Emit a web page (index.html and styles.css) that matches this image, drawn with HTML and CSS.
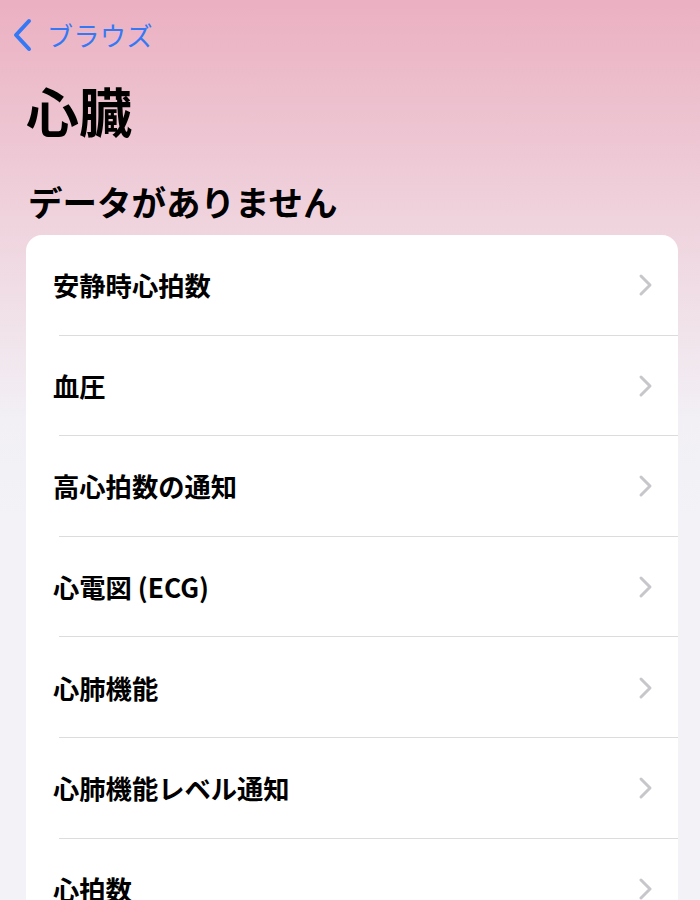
FILE: index.html
```html
<!DOCTYPE html>
<html lang="ja">
<head>
<meta charset="utf-8">
<link rel="stylesheet" href="styles.css">
</head>
<body>
<div class="page">
  <nav class="nav">
    <svg class="back-icon" width="22" height="34" viewBox="0 0 22 34"><path d="M18 3 L5 17 L18 31" fill="none" stroke="#3478f6" stroke-width="4" stroke-linecap="round" stroke-linejoin="round"/></svg>
    <span class="back-text">ブラウズ</span>
  </nav>
  <h1 class="title">心臓</h1>
  <h2 class="subtitle">データがありません</h2>
  <ul class="card">
    <li class="row"><span class="label">安静時心拍数</span><svg class="chev" width="15" height="24" viewBox="0 0 15 24"><path d="M3 3 L12 12 L3 21" fill="none" stroke="#c7c7cb" stroke-width="3" stroke-linecap="round" stroke-linejoin="round"/></svg></li>
    <li class="row"><span class="label">血圧</span><svg class="chev" width="15" height="24" viewBox="0 0 15 24"><path d="M3 3 L12 12 L3 21" fill="none" stroke="#c7c7cb" stroke-width="3" stroke-linecap="round" stroke-linejoin="round"/></svg></li>
    <li class="row"><span class="label">高心拍数の通知</span><svg class="chev" width="15" height="24" viewBox="0 0 15 24"><path d="M3 3 L12 12 L3 21" fill="none" stroke="#c7c7cb" stroke-width="3" stroke-linecap="round" stroke-linejoin="round"/></svg></li>
    <li class="row"><span class="label">心電図 (ECG)</span><svg class="chev" width="15" height="24" viewBox="0 0 15 24"><path d="M3 3 L12 12 L3 21" fill="none" stroke="#c7c7cb" stroke-width="3" stroke-linecap="round" stroke-linejoin="round"/></svg></li>
    <li class="row"><span class="label">心肺機能</span><svg class="chev" width="15" height="24" viewBox="0 0 15 24"><path d="M3 3 L12 12 L3 21" fill="none" stroke="#c7c7cb" stroke-width="3" stroke-linecap="round" stroke-linejoin="round"/></svg></li>
    <li class="row"><span class="label">心肺機能レベル通知</span><svg class="chev" width="15" height="24" viewBox="0 0 15 24"><path d="M3 3 L12 12 L3 21" fill="none" stroke="#c7c7cb" stroke-width="3" stroke-linecap="round" stroke-linejoin="round"/></svg></li>
    <li class="row"><span class="label">心拍数</span><svg class="chev" width="15" height="24" viewBox="0 0 15 24"><path d="M3 3 L12 12 L3 21" fill="none" stroke="#c7c7cb" stroke-width="3" stroke-linecap="round" stroke-linejoin="round"/></svg></li>
  </ul>
</div>
</body>
</html>
```

FILE: styles.css
```css
html, body {
  margin: 0;
  padding: 0;
}
body {
  width: 700px;
  height: 900px;
  overflow: hidden;
  background: linear-gradient(to bottom, #ebb0c1 0px, #efd3dd 220px, #f2f0f5 420px, #f2f2f7 520px, #f2f2f7 900px);
  font-family: "Noto Sans CJK JP", "Noto Sans", sans-serif;
  color: #000;
}
.page {
  padding: 0 22px 0 26px;
}
.nav {
  display: flex;
  align-items: center;
  height: 36px;
  padding-top: 17px;
  margin-left: -15px;
}
.back-icon {
  display: block;
  margin-right: 14px;
}
.back-text {
  font-size: 26px;
  color: #3478f6;
  line-height: 36px;
  letter-spacing: 0.5px;
}
.title {
  margin: 25px 0 0 0;
  font-size: 53px;
  font-weight: 700;
  line-height: 64px;
}
.subtitle {
  margin: 37px 0 0 2px;
  font-size: 34.5px;
  font-weight: 700;
  line-height: 44px;
}
.card {
  list-style: none;
  margin: 12px 0 0 0;
  padding: 0;
  background: #fff;
  border-radius: 16px;
  overflow: hidden;
}
.row {
  position: relative;
  display: flex;
  align-items: center;
  justify-content: space-between;
  height: 100.6px;
  padding: 0 25px 0 27px;
  box-sizing: border-box;
}
.row::after {
  content: "";
  position: absolute;
  left: 33px;
  right: 0;
  bottom: 0;
  height: 1px;
  background: #dcdcde;
}
.row:last-child::after {
  display: none;
}
.label {
  font-size: 26.3px;
  font-weight: 600;
  line-height: 36px;
}
.chev {
  display: block;
}
```
